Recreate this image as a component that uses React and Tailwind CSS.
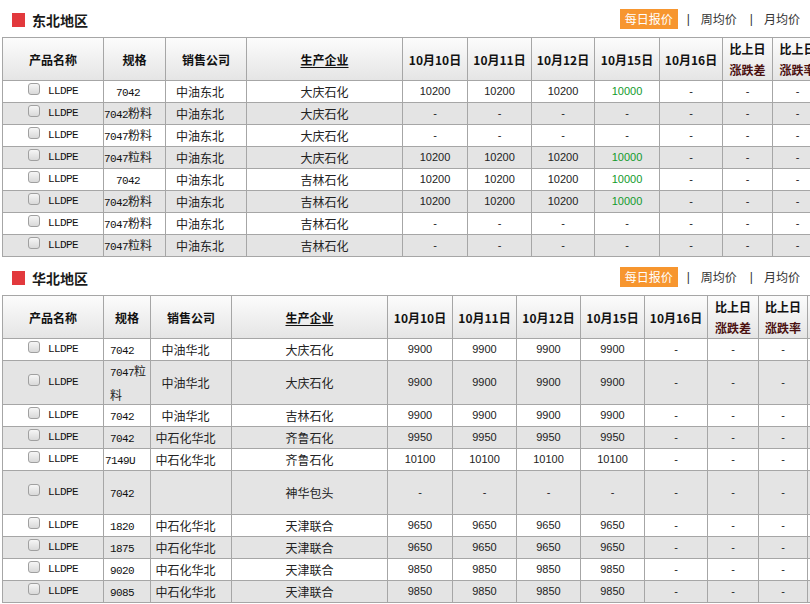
import React from "react";

const LINE = "border-[#a6a6a6]";

const northeast = [
  { spec: "7042", seller: "中油东北", maker: "大庆石化", prices: ["10200", "10200", "10200", "10000"] },
  { spec: "7042粉料", seller: "中油东北", maker: "大庆石化", prices: [] },
  { spec: "7047粉料", seller: "中油东北", maker: "大庆石化", prices: [] },
  { spec: "7047粒料", seller: "中油东北", maker: "大庆石化", prices: ["10200", "10200", "10200", "10000"] },
  { spec: "7042", seller: "中油东北", maker: "吉林石化", prices: ["10200", "10200", "10200", "10000"] },
  { spec: "7042粉料", seller: "中油东北", maker: "吉林石化", prices: ["10200", "10200", "10200", "10000"] },
  { spec: "7047粉料", seller: "中油东北", maker: "吉林石化", prices: [] },
  { spec: "7047粒料", seller: "中油东北", maker: "吉林石化", prices: [] },
];

const north = [
  { spec: "7042", seller: "中油华北", maker: "大庆石化", prices: ["9900", "9900", "9900", "9900"] },
  { spec: "7047粒料", seller: "中油华北", maker: "大庆石化", prices: ["9900", "9900", "9900", "9900"], tall: true },
  { spec: "7042", seller: "中油华北", maker: "吉林石化", prices: ["9900", "9900", "9900", "9900"] },
  { spec: "7042", seller: "中石化华北", maker: "齐鲁石化", prices: ["9950", "9950", "9950", "9950"] },
  { spec: "7149U", seller: "中石化华北", maker: "齐鲁石化", prices: ["10100", "10100", "10100", "10100"], tight: true },
  { spec: "7042", seller: "", maker: "神华包头", prices: [], tall: true },
  { spec: "1820", seller: "中石化华北", maker: "天津联合", prices: ["9650", "9650", "9650", "9650"] },
  { spec: "1875", seller: "中石化华北", maker: "天津联合", prices: ["9650", "9650", "9650", "9650"] },
  { spec: "9020", seller: "中石化华北", maker: "天津联合", prices: ["9850", "9850", "9850", "9850"] },
  { spec: "9085", seller: "中石化华北", maker: "天津联合", prices: ["9850", "9850", "9850", "9850"] },
];

const dates = ["10月10日", "10月11日", "10月12日", "10月15日", "10月16日"];

function Checkbox() {
  return (
    <span className="block w-[12px] h-[12px] mr-[8px] -mt-[5px] rounded-[3px] border border-[#a0a0a0] bg-linear-to-b from-[#f6f6f6] to-[#d9d9d9]" />
  );
}

// digits/letters in the spec look like a narrow mono face, the rest is cjk
function Spec({ text }) {
  const m = text.match(/^([0-9A-Z]+)(.*)$/);
  return (
    <>
      <span className="font-['Liberation_Mono'] text-[11px] tracking-[-0.6px] text-[#111]">{m[1]}</span>
      {m[2]}
    </>
  );
}

function SectionHead({ title, className = "" }) {
  return (
    <div className={`flex items-center justify-between h-[37px] pl-[12px] pr-[10px] ${className}`}>
      <div className="flex items-center mt-[3px]">
        <span className="w-[13px] h-[14px] bg-[#e2393d] mr-[7px]" />
        <span className="text-[14px] font-bold leading-[16px] text-[#1a1a1a]">{title}</span>
      </div>
      <div className="flex items-center text-[12px] leading-[20px] text-[#333]">
        <span className="bg-[#f7962f] text-white px-[5px]">每日报价</span>
        <span className="ml-[9px] font-['Liberation_Sans']">|</span>
        <span className="ml-[11px]">周均价</span>
        <span className="ml-[13px] font-['Liberation_Sans']">|</span>
        <span className="ml-[11px]">月均价</span>
      </div>
    </div>
  );
}

function PriceTable({ rows, widths, headH, specAlign, sellerPad, green, specWrap }) {
  const th = `border-r border-b ${LINE} bg-linear-to-b from-[#fcfcfc] to-[#e5e5e5] text-[12px] font-bold leading-[21px] text-[#111] text-center p-0`;
  const td = `border-r border-b ${LINE} p-0 align-middle`;
  const num = "font-['Liberation_Sans'] text-[11px]";
  const total = widths.reduce((a, b) => a + b, 0) + 1;

  return (
    <table
      className={`table-fixed border-separate border-spacing-0 border-l border-t ${LINE} ml-[2px]`}
      style={{ width: total }}
    >
      <thead>
        <tr style={{ height: headH }}>
          <th className={th} style={{ width: widths[0] }}>产品名称</th>
          <th className={th} style={{ width: widths[1] }}>规格</th>
          <th className={th} style={{ width: widths[2] }}>销售公司</th>
          <th className={th} style={{ width: widths[3] }}>
            <span className="underline underline-offset-2">生产企业</span>
          </th>
          {dates.map((d, i) => (
            <th key={d} className={th} style={{ width: widths[4 + i] }}>{d}</th>
          ))}
          <th className={th} style={{ width: widths[9] }}>
            比上日
            <br />
            <span className="text-[#4a1010]">涨跌差</span>
          </th>
          <th className={th} style={{ width: widths[10] }}>
            比上日
            <br />
            <span className="text-[#4a1010]">涨跌率</span>
          </th>
          <th className={th} style={{ width: widths[11] }} />
        </tr>
      </thead>
      <tbody>
        {rows.map((r, i) => {
          const h = r.tall ? "h-[43px]" : "h-[21px]";
          const cell = `flex items-center justify-center ${h}`;
          return (
            <tr key={i} className={i % 2 ? "bg-[#e4e4e4]" : "bg-white"}>
              <td className={td}>
                <div className={cell}>
                  <Checkbox />
                  <span className="font-['Liberation_Mono'] text-[11px] tracking-[-0.6px] leading-none text-[#111]">LLDPE</span>
                </div>
              </td>
              <td className={td}>
                {specWrap ? (
                  <div className={`${h} flex items-center text-[12px] leading-[21px] text-[#222] ${r.tight ? "pl-[1px]" : "pl-[6px]"} pr-[2px]`}>
                    <div>
                      <Spec text={r.spec} />
                    </div>
                  </div>
                ) : (
                  <div className={`${cell} whitespace-nowrap text-[12px] leading-none text-[#222] ${specAlign}`}>
                    <span>
                      <Spec text={r.spec} />
                    </span>
                  </div>
                )}
              </td>
              <td className={td}>
                <div className={`${cell} whitespace-nowrap text-[12px] leading-none text-[#222] ${sellerPad}`}>{r.seller}</div>
              </td>
              <td className={td}>
                <div className={`${cell} text-[12px] leading-none text-[#222]`}>{r.maker}</div>
              </td>
              {[0, 1, 2, 3].map((k) => {
                const v = r.prices[k];
                const isGreen = green && k === 3 && v;
                return (
                  <td key={k} className={td}>
                    <div className={`${cell} ${num} leading-none ${isGreen ? "text-[#139a2c]" : "text-[#222]"}`}>{v || "-"}</div>
                  </td>
                );
              })}
              {[0, 1, 2].map((k) => (
                <td key={k} className={td}>
                  <div className={`${cell} ${num} leading-none text-[#222]`}>-</div>
                </td>
              ))}
              <td className={td}>
                <div className={h} />
              </td>
            </tr>
          );
        })}
      </tbody>
    </table>
  );
}

export default function App() {
  return (
    <div className="w-[810px] h-[604px] overflow-hidden bg-white font-['Noto_Sans_CJK_SC',sans-serif]">
      <SectionHead title="东北地区" />
      <PriceTable
        rows={northeast}
        widths={[101, 62, 81, 156, 65, 64, 63, 65, 63, 50, 50, 80]}
        headH={43}
        specAlign="pr-[13px]"
        sellerPad="pr-[12px]"
        green
      />

      <SectionHead title="华北地区" className="mt-[1px]" />
      <PriceTable
        rows={north}
        widths={[101, 47, 81, 156, 65, 64, 64, 64, 63, 51, 49, 80]}
        headH={42}
        specWrap
        sellerPad="pr-[11px]"
      />
    </div>
  );
}
